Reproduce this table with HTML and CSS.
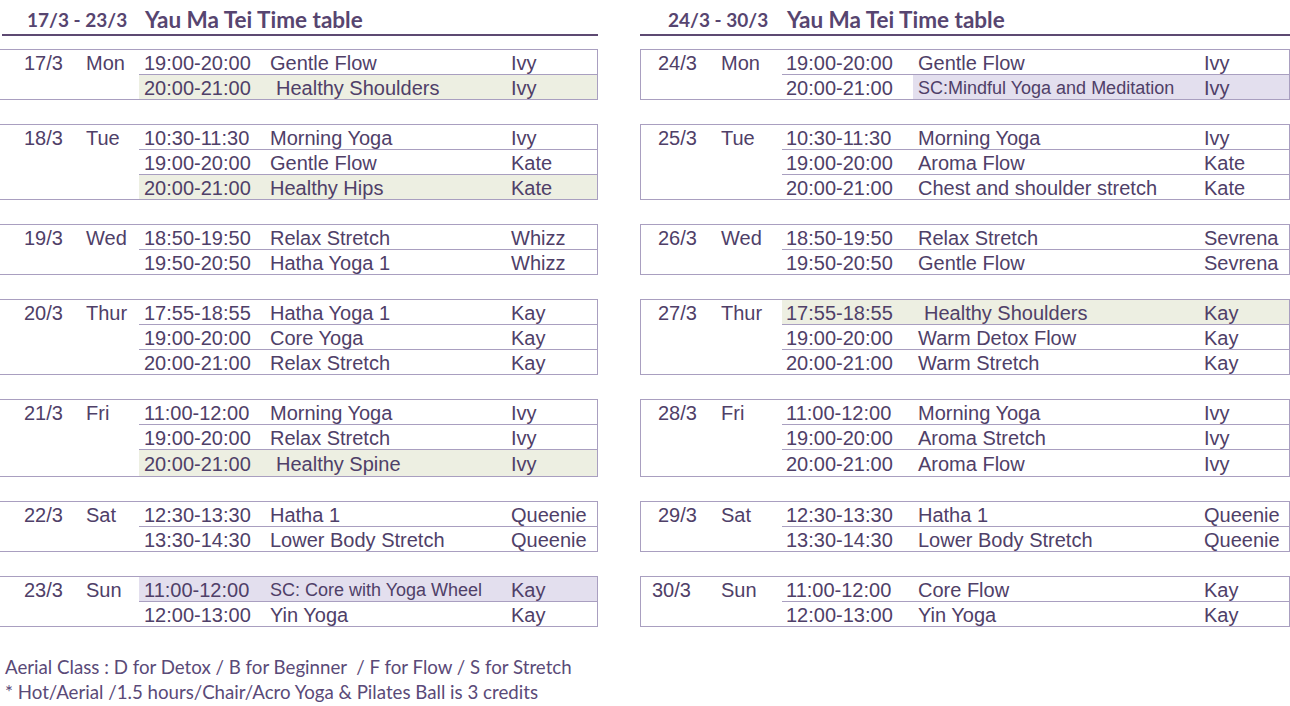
FILE: index.html
```html
<!DOCTYPE html>
<html>
<head>
<meta charset="utf-8">
<link rel="stylesheet" href="styles.css">
</head>
<body>
<div class="page">
  <div class="panels">
    <section class="week week-a">
      <header class="week-head"><span class="range">17/3 - 23/3</span><span class="title">Yau Ma Tei Time table</span></header>

      <div class="day">
        <div class="date">17/3</div><div class="dow">Mon</div>
        <div class="slots">
          <div class="slot"><span class="time">19:00-20:00</span><span class="cls">Gentle Flow</span><span class="tch">Ivy</span></div>
          <div class="slot hl-green"><span class="time">20:00-21:00</span><span class="cls ind">Healthy Shoulders</span><span class="tch">Ivy</span></div>
        </div>
      </div>

      <div class="day">
        <div class="date">18/3</div><div class="dow">Tue</div>
        <div class="slots">
          <div class="slot"><span class="time">10:30-11:30</span><span class="cls">Morning Yoga</span><span class="tch">Ivy</span></div>
          <div class="slot"><span class="time">19:00-20:00</span><span class="cls">Gentle Flow</span><span class="tch">Kate</span></div>
          <div class="slot hl-green"><span class="time">20:00-21:00</span><span class="cls">Healthy Hips</span><span class="tch">Kate</span></div>
        </div>
      </div>

      <div class="day">
        <div class="date">19/3</div><div class="dow">Wed</div>
        <div class="slots">
          <div class="slot"><span class="time">18:50-19:50</span><span class="cls">Relax Stretch</span><span class="tch">Whizz</span></div>
          <div class="slot"><span class="time">19:50-20:50</span><span class="cls">Hatha Yoga 1</span><span class="tch">Whizz</span></div>
        </div>
      </div>

      <div class="day">
        <div class="date">20/3</div><div class="dow">Thur</div>
        <div class="slots">
          <div class="slot"><span class="time">17:55-18:55</span><span class="cls">Hatha Yoga 1</span><span class="tch">Kay</span></div>
          <div class="slot"><span class="time">19:00-20:00</span><span class="cls">Core Yoga</span><span class="tch">Kay</span></div>
          <div class="slot"><span class="time">20:00-21:00</span><span class="cls">Relax Stretch</span><span class="tch">Kay</span></div>
        </div>
      </div>

      <div class="day">
        <div class="date">21/3</div><div class="dow">Fri</div>
        <div class="slots">
          <div class="slot"><span class="time">11:00-12:00</span><span class="cls">Morning Yoga</span><span class="tch">Ivy</span></div>
          <div class="slot"><span class="time">19:00-20:00</span><span class="cls">Relax Stretch</span><span class="tch">Ivy</span></div>
          <div class="slot tall hl-green"><span class="time">20:00-21:00</span><span class="cls ind">Healthy Spine</span><span class="tch">Ivy</span></div>
        </div>
      </div>

      <div class="day">
        <div class="date">22/3</div><div class="dow">Sat</div>
        <div class="slots">
          <div class="slot"><span class="time">12:30-13:30</span><span class="cls">Hatha 1</span><span class="tch">Queenie</span></div>
          <div class="slot"><span class="time">13:30-14:30</span><span class="cls">Lower Body Stretch</span><span class="tch">Queenie</span></div>
        </div>
      </div>

      <div class="day">
        <div class="date">23/3</div><div class="dow">Sun</div>
        <div class="slots">
          <div class="slot hl-purple"><span class="time">11:00-12:00</span><span class="cls small">SC: Core with Yoga Wheel</span><span class="tch">Kay</span></div>
          <div class="slot"><span class="time">12:00-13:00</span><span class="cls">Yin Yoga</span><span class="tch">Kay</span></div>
        </div>
      </div>
    </section>

    <section class="week week-b">
      <header class="week-head"><span class="range">24/3 - 30/3</span><span class="title">Yau Ma Tei Time table</span></header>

      <div class="day">
        <div class="date">24/3</div><div class="dow">Mon</div>
        <div class="slots">
          <div class="slot"><span class="time">19:00-20:00</span><span class="cls">Gentle Flow</span><span class="tch">Ivy</span></div>
          <div class="slot hl-purple-part"><span class="time">20:00-21:00</span><span class="cls small">SC:Mindful Yoga and Meditation</span><span class="tch">Ivy</span></div>
        </div>
      </div>

      <div class="day">
        <div class="date">25/3</div><div class="dow">Tue</div>
        <div class="slots">
          <div class="slot"><span class="time">10:30-11:30</span><span class="cls">Morning Yoga</span><span class="tch">Ivy</span></div>
          <div class="slot"><span class="time">19:00-20:00</span><span class="cls">Aroma Flow</span><span class="tch">Kate</span></div>
          <div class="slot"><span class="time">20:00-21:00</span><span class="cls">Chest and shoulder stretch</span><span class="tch">Kate</span></div>
        </div>
      </div>

      <div class="day">
        <div class="date">26/3</div><div class="dow">Wed</div>
        <div class="slots">
          <div class="slot"><span class="time">18:50-19:50</span><span class="cls">Relax Stretch</span><span class="tch">Sevrena</span></div>
          <div class="slot"><span class="time">19:50-20:50</span><span class="cls">Gentle Flow</span><span class="tch">Sevrena</span></div>
        </div>
      </div>

      <div class="day">
        <div class="date">27/3</div><div class="dow">Thur</div>
        <div class="slots">
          <div class="slot hl-green"><span class="time">17:55-18:55</span><span class="cls ind">Healthy Shoulders</span><span class="tch">Kay</span></div>
          <div class="slot"><span class="time">19:00-20:00</span><span class="cls">Warm Detox Flow</span><span class="tch">Kay</span></div>
          <div class="slot"><span class="time">20:00-21:00</span><span class="cls">Warm Stretch</span><span class="tch">Kay</span></div>
        </div>
      </div>

      <div class="day">
        <div class="date">28/3</div><div class="dow">Fri</div>
        <div class="slots">
          <div class="slot"><span class="time">11:00-12:00</span><span class="cls">Morning Yoga</span><span class="tch">Ivy</span></div>
          <div class="slot"><span class="time">19:00-20:00</span><span class="cls">Aroma Stretch</span><span class="tch">Ivy</span></div>
          <div class="slot tall"><span class="time">20:00-21:00</span><span class="cls">Aroma Flow</span><span class="tch">Ivy</span></div>
        </div>
      </div>

      <div class="day">
        <div class="date">29/3</div><div class="dow">Sat</div>
        <div class="slots">
          <div class="slot"><span class="time">12:30-13:30</span><span class="cls">Hatha 1</span><span class="tch">Queenie</span></div>
          <div class="slot"><span class="time">13:30-14:30</span><span class="cls">Lower Body Stretch</span><span class="tch">Queenie</span></div>
        </div>
      </div>

      <div class="day">
        <div class="date date-shift">30/3</div><div class="dow">Sun</div>
        <div class="slots">
          <div class="slot"><span class="time">11:00-12:00</span><span class="cls">Core Flow</span><span class="tch">Kay</span></div>
          <div class="slot"><span class="time">12:00-13:00</span><span class="cls">Yin Yoga</span><span class="tch">Kay</span></div>
        </div>
      </div>
    </section>
  </div>

  <footer class="notes">
    <p>Aerial Class : D for Detox / B for Beginner  / F for Flow / S for Stretch</p>
    <p>* Hot/Aerial /1.5 hours/Chair/Acro Yoga &amp; Pilates Ball is 3 credits</p>
  </footer>
</div>
</body>
</html>
```

FILE: styles.css
```css
html, body {
  margin: 0;
  padding: 0;
  background: #ffffff;
}

.page {
  width: 1290px;
  height: 706px;
  overflow: hidden;
  font-family: "Liberation Sans", Arial, sans-serif;
  color: #4f4068;
}

.panels {
  display: flex;
  gap: 42px;
}

.week-a { width: 598px; }
.week-b { width: 650px; }

.week-head {
  height: 30px;
  padding-top: 4px;
  border-bottom: 2px solid #5d4a72;
  display: flex;
  align-items: center;
  font-family: "Lato", "Noto Sans", sans-serif;
  font-weight: 700;
  font-size: 22.5px;
  color: #574570;
  margin-bottom: 13px;
  white-space: nowrap;
}

.range {
  flex: none;
  box-sizing: border-box;
  font-size: 19px;
  padding-top: 1px;
}

.week-a .week-head { margin-left: 2px; }
.week-a .range { padding-left: 25px; width: 143px; }
.week-b .range { padding-left: 28px; width: 147px; }

.day {
  display: flex;
  border-top: 1px solid #a99fc0;
  border-bottom: 1px solid #a99fc0;
  border-right: 1px solid #a99fc0;
  margin-bottom: 24px;
  font-size: 20px;
  line-height: 26px;
}

.week-b .day { border-left: 1px solid #a99fc0; }

.date, .dow { box-sizing: border-box; }

.week-a .date { width: 80px; padding-left: 24px; }
.week-a .dow { width: 59px; padding-left: 6px; }
.week-b .date { width: 71px; padding-left: 17px; }
.week-b .dow { width: 70px; padding-left: 9px; }

.date-shift { text-indent: -6px; }

.slots { flex: 1; }

.slot {
  display: flex;
  height: 24px;
}
.slot + .slot { border-top: 1px solid #a99fc0; }
.slot.tall { height: 26px; line-height: 28px; }

.slot span { box-sizing: border-box; white-space: pre; }

.week-a .time { width: 126px; padding-left: 5px; }
.week-a .cls  { width: 241px; padding-left: 5px; }
.week-a .tch  { flex: 1; padding-left: 5px; }

.week-b .time { width: 131px; padding-left: 4px; }
.week-b .cls  { width: 286px; padding-left: 5px; }
.week-b .tch  { flex: 1; padding-left: 5px; }

.cls.ind { padding-left: 11px; }
.cls.small { font-size: 18px; }

.hl-green { background: #edefe2; }
.hl-purple { background: #e3dfee; }
.hl-purple-part .cls,
.hl-purple-part .tch { background: #e3dfee; }

.notes {
  margin-top: 4px;
  padding-left: 5px;
  font-family: "Lato", "Open Sans", sans-serif;
  font-size: 18.7px;
  line-height: 25px;
  color: #5a4a78;
}
.notes p { margin: 0; white-space: pre; }
```
